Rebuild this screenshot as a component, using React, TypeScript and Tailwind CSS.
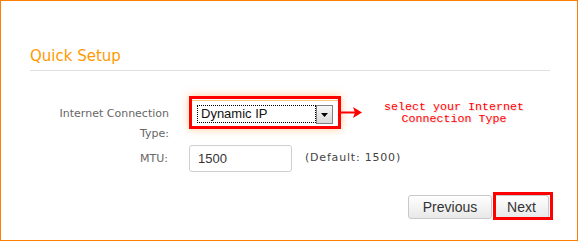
import React from "react";

export default function App() {
  return (
    <div className="w-[578px] h-[241px] border border-[#ff8000] bg-white box-border">
      <div className="pl-[29px] pt-[46px] w-[549px]">
        <div
          className="text-[15px] leading-[18px] text-[#ff9900]"
          style={{ fontFamily: '"DejaVu Sans", sans-serif' }}
        >
          Quick Setup
        </div>
        <div className="mt-[5px] h-px w-[520px] bg-[#e1e1e1]" />

        {/* Row 1 */}
        <div className="mt-[25px] flex items-start">
          <div
            className="mt-[8px] w-[139px] text-right text-[11px] leading-[20px] text-[#666]"
            style={{ fontFamily: '"DejaVu Sans", sans-serif' }}
          >
            Internet Connection Type:
          </div>
          <div className="ml-[20px] w-[152px] h-[33px] border-[3px] border-[#ff0000] bg-white shadow-[0_0_8px_rgba(255,160,60,0.55)] flex flex-col">
            <div className="mt-px h-px bg-[#f8c27a]" />
            <div className="mt-[4px] ml-[5px] flex">
              <div
                className="w-[119px] h-[18px] border border-dotted border-black flex items-center pl-[3px] text-[13px] leading-[16px] text-[#111]"
                style={{ fontFamily: '"Liberation Sans", Arial, sans-serif' }}
              >
                Dynamic IP
              </div>
              <div className="w-[17px] h-[19px] border border-[#808080] bg-gradient-to-b from-[#f7f7f7] to-[#d9d9d9] flex items-center justify-center">
                <svg width="7" height="4" viewBox="0 0 7 4">
                  <polygon points="0,0 7,0 3.5,4" fill="#000" />
                </svg>
              </div>
            </div>
          </div>
          <svg width="22" height="14" viewBox="0 0 22 14" className="mt-[10px]">
            <rect x="0" y="5.5" width="16" height="2" fill="#ff0000" />
            <polygon points="12,1 21,6.5 12,12 14,6.5" fill="#ff0000" />
          </svg>
          <div
            className="ml-[21px] mt-[5px] text-center text-[11.67px] leading-[12px] text-[#ff0000] whitespace-pre"
            style={{
              fontFamily: '"Liberation Mono", "Courier New", monospace',
              textShadow: "1px 1px 0 rgba(220,190,190,0.5)",
            }}
          >
            {"select your Internet\nConnection Type"}
          </div>
        </div>

        {/* Row 2 */}
        <div className="mt-px flex items-center">
          <div
            className="w-[138px] text-right text-[11px] leading-[20px] text-[#666]"
            style={{ fontFamily: '"DejaVu Sans", sans-serif' }}
          >
            MTU:
          </div>
          <div
            className="ml-[21px] w-[103px] h-[27px] border border-[#cfcfcf] rounded-[3px] bg-white flex items-center pl-[8px] text-[13px] text-[#333]"
            style={{ fontFamily: '"Liberation Sans", Arial, sans-serif' }}
          >
            1500
          </div>
          <div
            className="ml-[13px] text-[11px] tracking-[0.8px] text-[#444]"
            style={{ fontFamily: '"DejaVu Sans", sans-serif' }}
          >
            (Default: 1500)
          </div>
        </div>

        {/* Row 3 */}
        <div
          className="mt-[23px] w-[520px] flex justify-end pr-px"
          style={{ fontFamily: '"Liberation Sans", Arial, sans-serif' }}
        >
          <button className="w-[84px] h-[24px] border border-[#c8c8c8] rounded-[3px] bg-gradient-to-b from-white to-[#e8e8e8] text-[14px] text-[#333] leading-none">
            Previous
          </button>
          <div className="relative ml-[2px]">
            <button className="w-[55px] h-[24px] border border-[#c8c8c8] rounded-[3px] bg-gradient-to-b from-white to-[#e8e8e8] text-[14px] text-[#333] leading-none">
              Next
            </button>
            <div className="absolute left-[-1px] top-[-3px] right-[-4px] bottom-[-1px] border-[3px] border-[#ff0000]" />
          </div>
        </div>
      </div>
    </div>
  );
}
